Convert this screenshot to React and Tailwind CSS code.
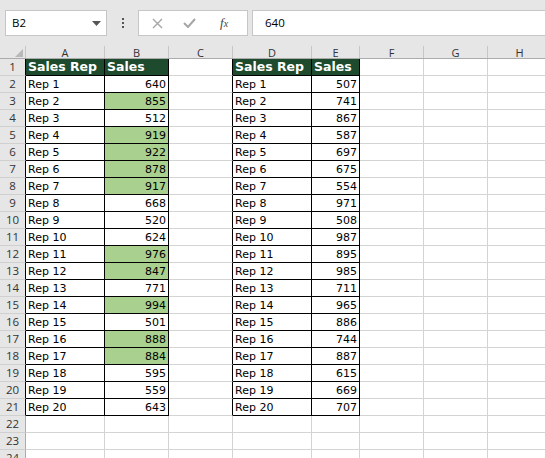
import React from 'react';

const COLS = [
  { key: 'A', w: 79 },
  { key: 'B', w: 64 },
  { key: 'C', w: 64 },
  { key: 'D', w: 79 },
  { key: 'E', w: 48 },
  { key: 'F', w: 64 },
  { key: 'G', w: 64 },
  { key: 'H', w: 64 },
];

const salesB = [640, 855, 512, 919, 922, 878, 917, 668, 520, 624, 976, 847, 771, 994, 501, 888, 884, 595, 559, 643];
const salesE = [507, 741, 867, 587, 697, 675, 554, 971, 508, 987, 895, 985, 711, 965, 886, 744, 887, 615, 669, 707];

const inTable = (col, row) => row <= 21 && ['A', 'B', 'D', 'E'].includes(col);

function cellContent(col, row) {
  if (row === 1) {
    if (col === 'A' || col === 'D') return { text: 'Sales Rep', head: true };
    if (col === 'B' || col === 'E') return { text: 'Sales', head: true };
    return null;
  }
  if (row > 21) return null;
  const i = row - 2;
  if (col === 'A' || col === 'D') return { text: `Rep ${i + 1}` };
  if (col === 'B') return { text: salesB[i], num: true, hi: salesB[i] > 800 };
  if (col === 'E') return { text: salesE[i], num: true };
  return null;
}

function Cell({ col, w, row, nextCol }) {
  const c = cellContent(col, row);
  const tbl = inTable(col, row);
  const rightDark = tbl || (nextCol && inTable(nextCol, row));
  const bottomDark = tbl;
  let bg = 'bg-white';
  if (c && c.head) bg = 'bg-[#1e4b2d]';
  else if (c && c.hi) bg = 'bg-[#a9d08e]';
  return (
    <div
      style={{ width: w }}
      className={`h-[17px] shrink-0 border-r border-b flex items-center overflow-hidden whitespace-nowrap ${bg} ${
        rightDark ? 'border-r-black' : 'border-r-[#d4d4d4]'
      } ${bottomDark ? 'border-b-black' : 'border-b-[#d4d4d4]'} ${c && c.num ? 'justify-end pr-[2px]' : 'pl-[2px]'}`}
    >
      {c && (
        <span
          className={
            c.head
              ? 'text-white font-bold text-[12.5px] leading-none'
              : 'text-black text-[11px] leading-none'
          }
        >
          {c.text}
        </span>
      )}
    </div>
  );
}

export default function App() {
  const rows = Array.from({ length: 24 }, (_, i) => i + 1);
  return (
    <div className="w-[545px] h-[458px] overflow-hidden bg-white" style={{ fontFamily: '"DejaVu Sans", Verdana, sans-serif' }}>
      {/* toolbar */}
      <div className="h-[46px] bg-[#e6e6e6] flex items-start pt-[10px] pl-[5px] gap-0" style={{ fontFamily: '"Open Sans", sans-serif' }}>
        <div className="w-[102px] h-[26px] bg-white border border-[#c6c6c6] flex items-center justify-between pl-[6px] pr-[5px] text-[11.5px] text-black shrink-0">
          <span>B2</span>
          <svg width="9" height="5" viewBox="0 0 9 5"><path d="M0 0h9L4.5 5z" fill="#555" /></svg>
        </div>
        <div className="w-[31px] h-[26px] flex flex-col items-center justify-center gap-[2px] shrink-0">
          <span className="w-[2px] h-[2px] bg-[#555]" />
          <span className="w-[2px] h-[2px] bg-[#555]" />
          <span className="w-[2px] h-[2px] bg-[#555]" />
        </div>
        <div className="w-[110px] h-[26px] bg-white border border-[#c6c6c6] flex items-center shrink-0 relative">
          <svg className="ml-[13px]" width="11" height="11" viewBox="0 0 11 11">
            <path d="M1 1l9 9M10 1l-9 9" stroke="#a6a6a6" strokeWidth="1.4" />
          </svg>
          <svg className="ml-[20px]" width="13" height="10" viewBox="0 0 13 10">
            <path d="M1 5l4 4 7-8" stroke="#a6a6a6" strokeWidth="2" fill="none" />
          </svg>
          <span className="ml-[24px] text-[13px] italic text-[#444]" style={{ fontFamily: '"Liberation Serif", serif' }}>
            f<span className="text-[10px]">x</span>
          </span>
        </div>
        <div className="ml-[4px] flex-1 h-[26px] bg-white border border-r-0 border-[#c6c6c6] flex items-center pl-[12px] text-[11.5px] text-black">
          640
        </div>
      </div>

      {/* column headers */}
      <div className="flex h-[13px] bg-[#e6e6e6] border-b border-[#ababab]" style={{ fontFamily: '"Open Sans", sans-serif' }}>
        <div className="w-[26px] shrink-0 border-r border-[#c6c6c6] relative">
          <svg className="absolute right-[2px] bottom-[1px]" width="8" height="8" viewBox="0 0 8 8">
            <path d="M8 0v8H0z" fill="#b8b8b8" />
          </svg>
        </div>
        {COLS.map((c) => (
          <div
            key={c.key}
            style={{ width: c.w }}
            className="shrink-0 border-r border-[#c6c6c6] flex items-center justify-center text-[11px] leading-none text-[#333]"
          >
            {c.key}
          </div>
        ))}
      </div>

      {/* grid */}
      {rows.map((r) => (
        <div key={r} className="flex">
          <div
            className={`w-[26px] h-[17px] shrink-0 bg-[#e6e6e6] border-b border-b-[#d0d0d0] border-r flex items-center justify-center text-[11.5px] leading-none text-[#333] ${
              r <= 21 ? 'border-r-black' : 'border-r-[#ababab]'
            }`}
            style={{ fontFamily: '"Open Sans", sans-serif' }}
          >
            {r}
          </div>
          {COLS.map((c, i) => (
            <Cell key={c.key} col={c.key} w={c.w} row={r} nextCol={COLS[i + 1] && COLS[i + 1].key} />
          ))}
        </div>
      ))}
    </div>
  );
}
